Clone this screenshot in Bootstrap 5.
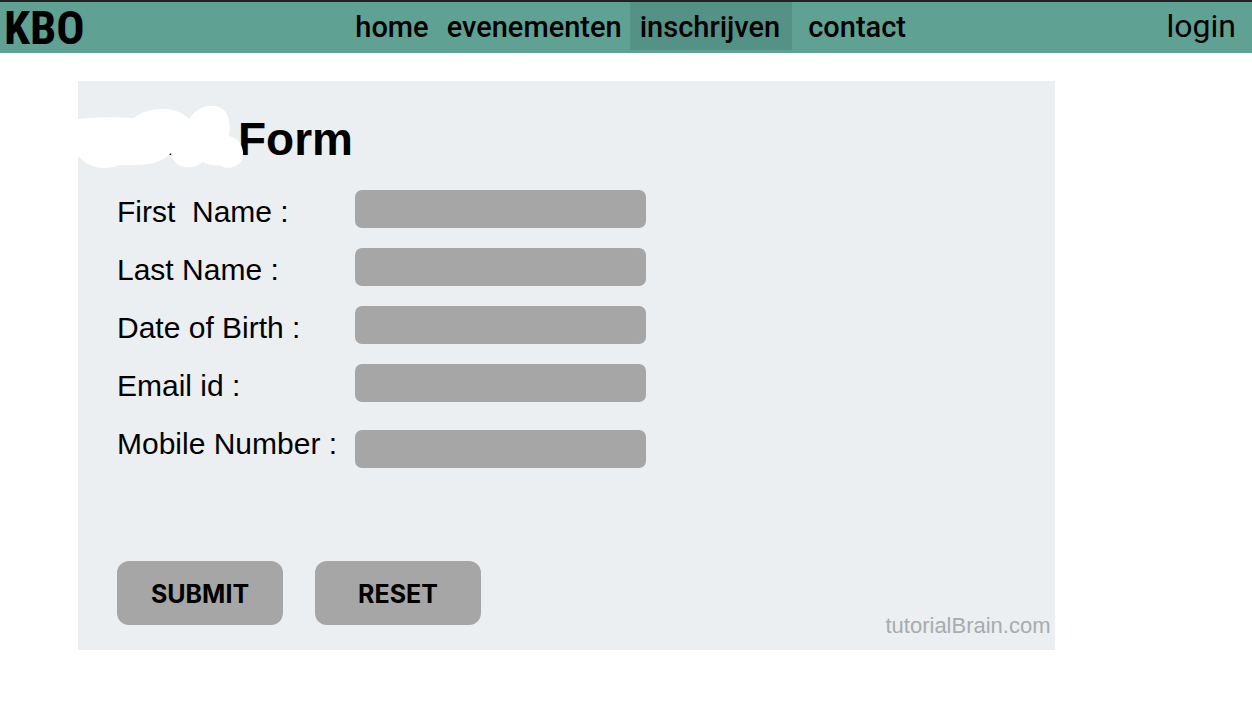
<!DOCTYPE html>
<html lang="nl">
<head>
<meta charset="utf-8">
<meta name="viewport" content="width=device-width, initial-scale=1">
<title>KBO inschrijven</title>
<link href="https://cdn.jsdelivr.net/npm/bootstrap@5.3.0/dist/css/bootstrap.min.css" rel="stylesheet">
<style>
  body { background: #fff; color: #000; font-family: "Liberation Sans", Arial, sans-serif; }
  .site-bar { background: #5fa294; border-top: 2px solid #222; min-height: 53px; }
  .site-bar a { color: #000; text-decoration: none; }
  .site-logo { font: 700 47px/51px "Roboto Condensed", Roboto, sans-serif; }
  .site-bar .nav-link { font: 500 29px/46px Roboto, sans-serif; padding: 2px 8px 0 10px; }
  .site-bar .nav-link.active { background: #559286; padding-right: 12px; }
  .site-bar .active-next { padding-left: 16px; }
  .site-login { font: 400 32px/48px Roboto, sans-serif; }
  .form-panel { background: #ebeff2; width: 78%; margin: 28px 0 57px 78px; padding: 24px 4px 9px 0; }
  .form-title { font-size: 46px; line-height: 68px; }
  .title-cloud { width: 166px; height: 64px; margin-right: -6px; position: relative; }
  .form-fields { padding: 17px 0 0 39px; font-size: 30px; line-height: 44px; }
  .field-row { min-height: 58px; }
  .field-row label { width: 238px; white-space: pre; }
  .field-row .form-control { width: 291px; height: 38px; background: #a6a6a6; border: 0; border-radius: 7px; }
  .form-actions { gap: 32px; padding: 81px 0 0 39px; }
  .form-actions .btn { width: 166px; height: 64px; background: #a6a6a6; color: #000; border: 0; border-radius: 12px; font: 700 25px/30px Inter, sans-serif; padding: 8px 0 6px; }
  .credit { color: #a9abad; font-size: 22px; line-height: 30px; }
  .credit-line { margin-top: -14px; }
</style>
</head>
<body>
<header>
  <nav class="site-bar d-flex flex-wrap justify-content-between align-items-start ps-1 pe-3" aria-label="Hoofdmenu">
    <a class="site-logo" href="#">KBO</a>
    <ul class="nav ms-2">
      <li class="nav-item"><a class="nav-link" href="#">home</a></li>
      <li class="nav-item"><a class="nav-link" href="#">evenementen</a></li>
      <li class="nav-item"><a class="nav-link active" aria-current="page" href="#">inschrijven</a></li>
      <li class="nav-item"><a class="nav-link active-next" href="#">contact</a></li>
    </ul>
    <a class="site-login" href="#">login</a>
  </nav>
</header>
<main>
  <form class="form-panel">
    <div class="d-flex align-items-start">
      <svg class="title-cloud flex-shrink-0" viewBox="0 0 166 64" aria-hidden="true">
        <path d="M91 47h3v3h-3z" fill="#222"/>
        <path fill="#fff" d="M0 14C18 12 38 12 56 13C69 2 96-1 111 14C120 1 132-1 141 2C151 6 153 18 151 31C160 33 166 41 165 51C164 60 153 66 143 61C138 60 131 61 125 57C115 66 95 64 93 48C80 62 59 60 42 60C24 67 9 61 0 51Z"/>
      </svg>
      <h1 class="form-title fw-bold mb-0">Form</h1>
    </div>
    <div class="form-fields">
      <div class="field-row d-flex flex-wrap align-items-start"><label for="firstName">First  Name :</label><input class="form-control" type="text" id="firstName"></div>
      <div class="field-row d-flex flex-wrap align-items-start"><label for="lastName">Last Name :</label><input class="form-control" type="text" id="lastName"></div>
      <div class="field-row d-flex flex-wrap align-items-start"><label for="birthDate">Date of Birth :</label><input class="form-control" type="text" id="birthDate"></div>
      <div class="field-row d-flex flex-wrap align-items-start"><label for="email">Email id :</label><input class="form-control" type="email" id="email"></div>
      <div class="field-row d-flex flex-wrap align-items-start"><label for="mobile">Mobile Number :</label><input class="form-control mt-2" type="tel" id="mobile"></div>
    </div>
    <div class="form-actions d-flex flex-wrap">
      <button class="btn" type="submit">SUBMIT</button>
      <button class="btn" type="reset">RESET</button>
    </div>
    <div class="credit-line text-end"><span class="credit">tutorialBrain.com</span></div>
  </form>
</main>
<script src="https://cdn.jsdelivr.net/npm/bootstrap@5.3.0/dist/js/bootstrap.bundle.min.js"></script>
</body>
</html>
